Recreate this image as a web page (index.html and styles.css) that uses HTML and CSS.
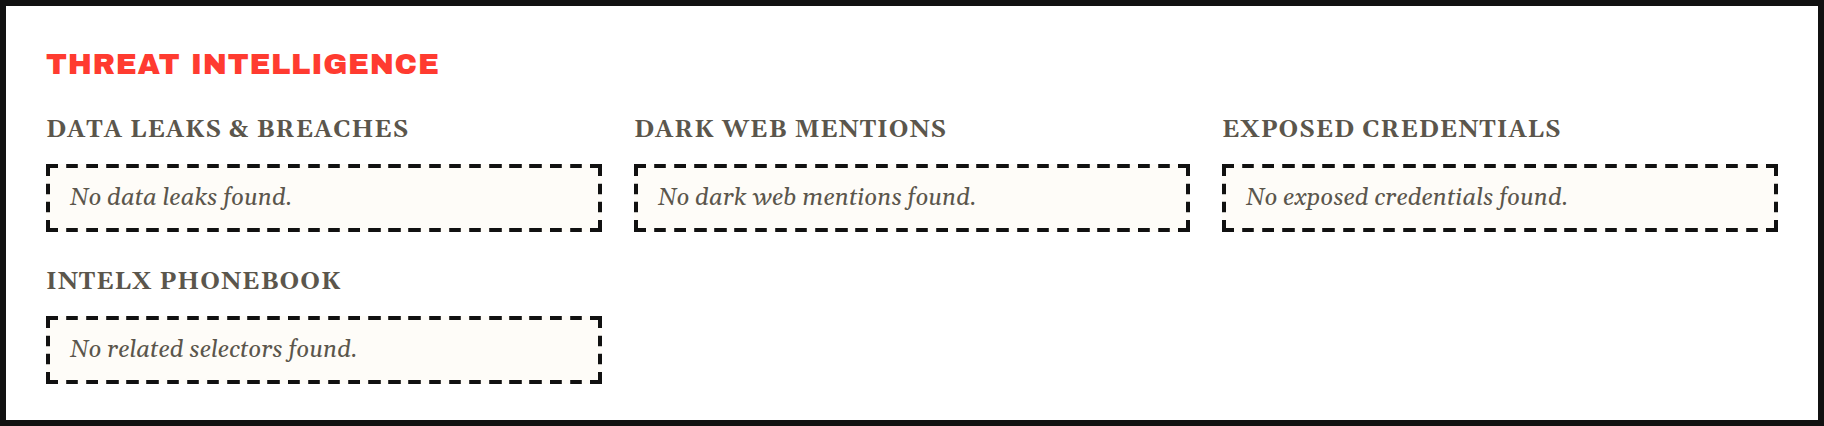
FILE: index.html
```html
<!DOCTYPE html>
<html lang="en">
<head>
    <meta charset="UTF-8">
    <meta name="viewport" content="width=device-width, initial-scale=1.0">
    <title>Threat Intelligence</title>
    <link rel="stylesheet" href="styles.css">
</head>
<body>
    <section class="panel">
        <h2 class="panel-title">Threat Intelligence</h2>

        <div class="intel-grid">
            <div class="intel-block">
                <h3>Data Leaks &amp; Breaches</h3>
                <p class="empty">No data leaks found.</p>
            </div>
            <div class="intel-block">
                <h3>Dark Web Mentions</h3>
                <p class="empty">No dark web mentions found.</p>
            </div>
            <div class="intel-block">
                <h3>Exposed Credentials</h3>
                <p class="empty">No exposed credentials found.</p>
            </div>
            <div class="intel-block">
                <h3>IntelX Phonebook</h3>
                <p class="empty">No related selectors found.</p>
            </div>
        </div>
    </section>
</body>
</html>
```

FILE: styles.css
```css
* {
    box-sizing: border-box;
}
body {
    margin: 0;
    background: #fff;
    color: #5b564c;
    font-family: Georgia, Gelasio, 'Liberation Serif', serif;
    font-size: 24px;
    line-height: 36px;
}
.panel {
    padding: 36px 40px;
    border: 6px solid #111;
    background: #fff;
}
.panel-title {
    margin: 0 0 24px;
    font-family: 'Archivo Black', Inter, sans-serif;
    font-size: 29px;
    font-weight: 400;
    line-height: 46px;
    letter-spacing: 0.025em;
    text-transform: uppercase;
    color: #ff3b30;
}
.intel-grid {
    display: grid;
    grid-template-columns: repeat(3, 1fr);
    gap: 32px;
}
.intel-block h3 {
    margin: 0 0 16px;
    font-size: 24px;
    font-weight: 700;
    letter-spacing: 1px;
    text-transform: uppercase;
}
/* long dashes: 12px on, 8px off, solid corners */
.empty {
    margin: 0;
    padding: 12px 20px;
    border: 4px dashed #111;
    border-image: url("data:image/svg+xml,%3Csvg xmlns='http://www.w3.org/2000/svg' width='52' height='52'%3E%3Cpath fill='%23111' d='M0 0h12v4H4v8H0zM52 0v12h-4V4h-8V0zM52 52H40v-4h8v-8h4zM0 52V40h4v8h8v4zM20 0h12v4H20zM20 48h12v4H20zM0 20h4v12H0zM48 20h4v12h-4z'/%3E%3C/svg%3E") 16 / 16px round;
    background: #fefcf8;
    font-style: italic;
}
```
